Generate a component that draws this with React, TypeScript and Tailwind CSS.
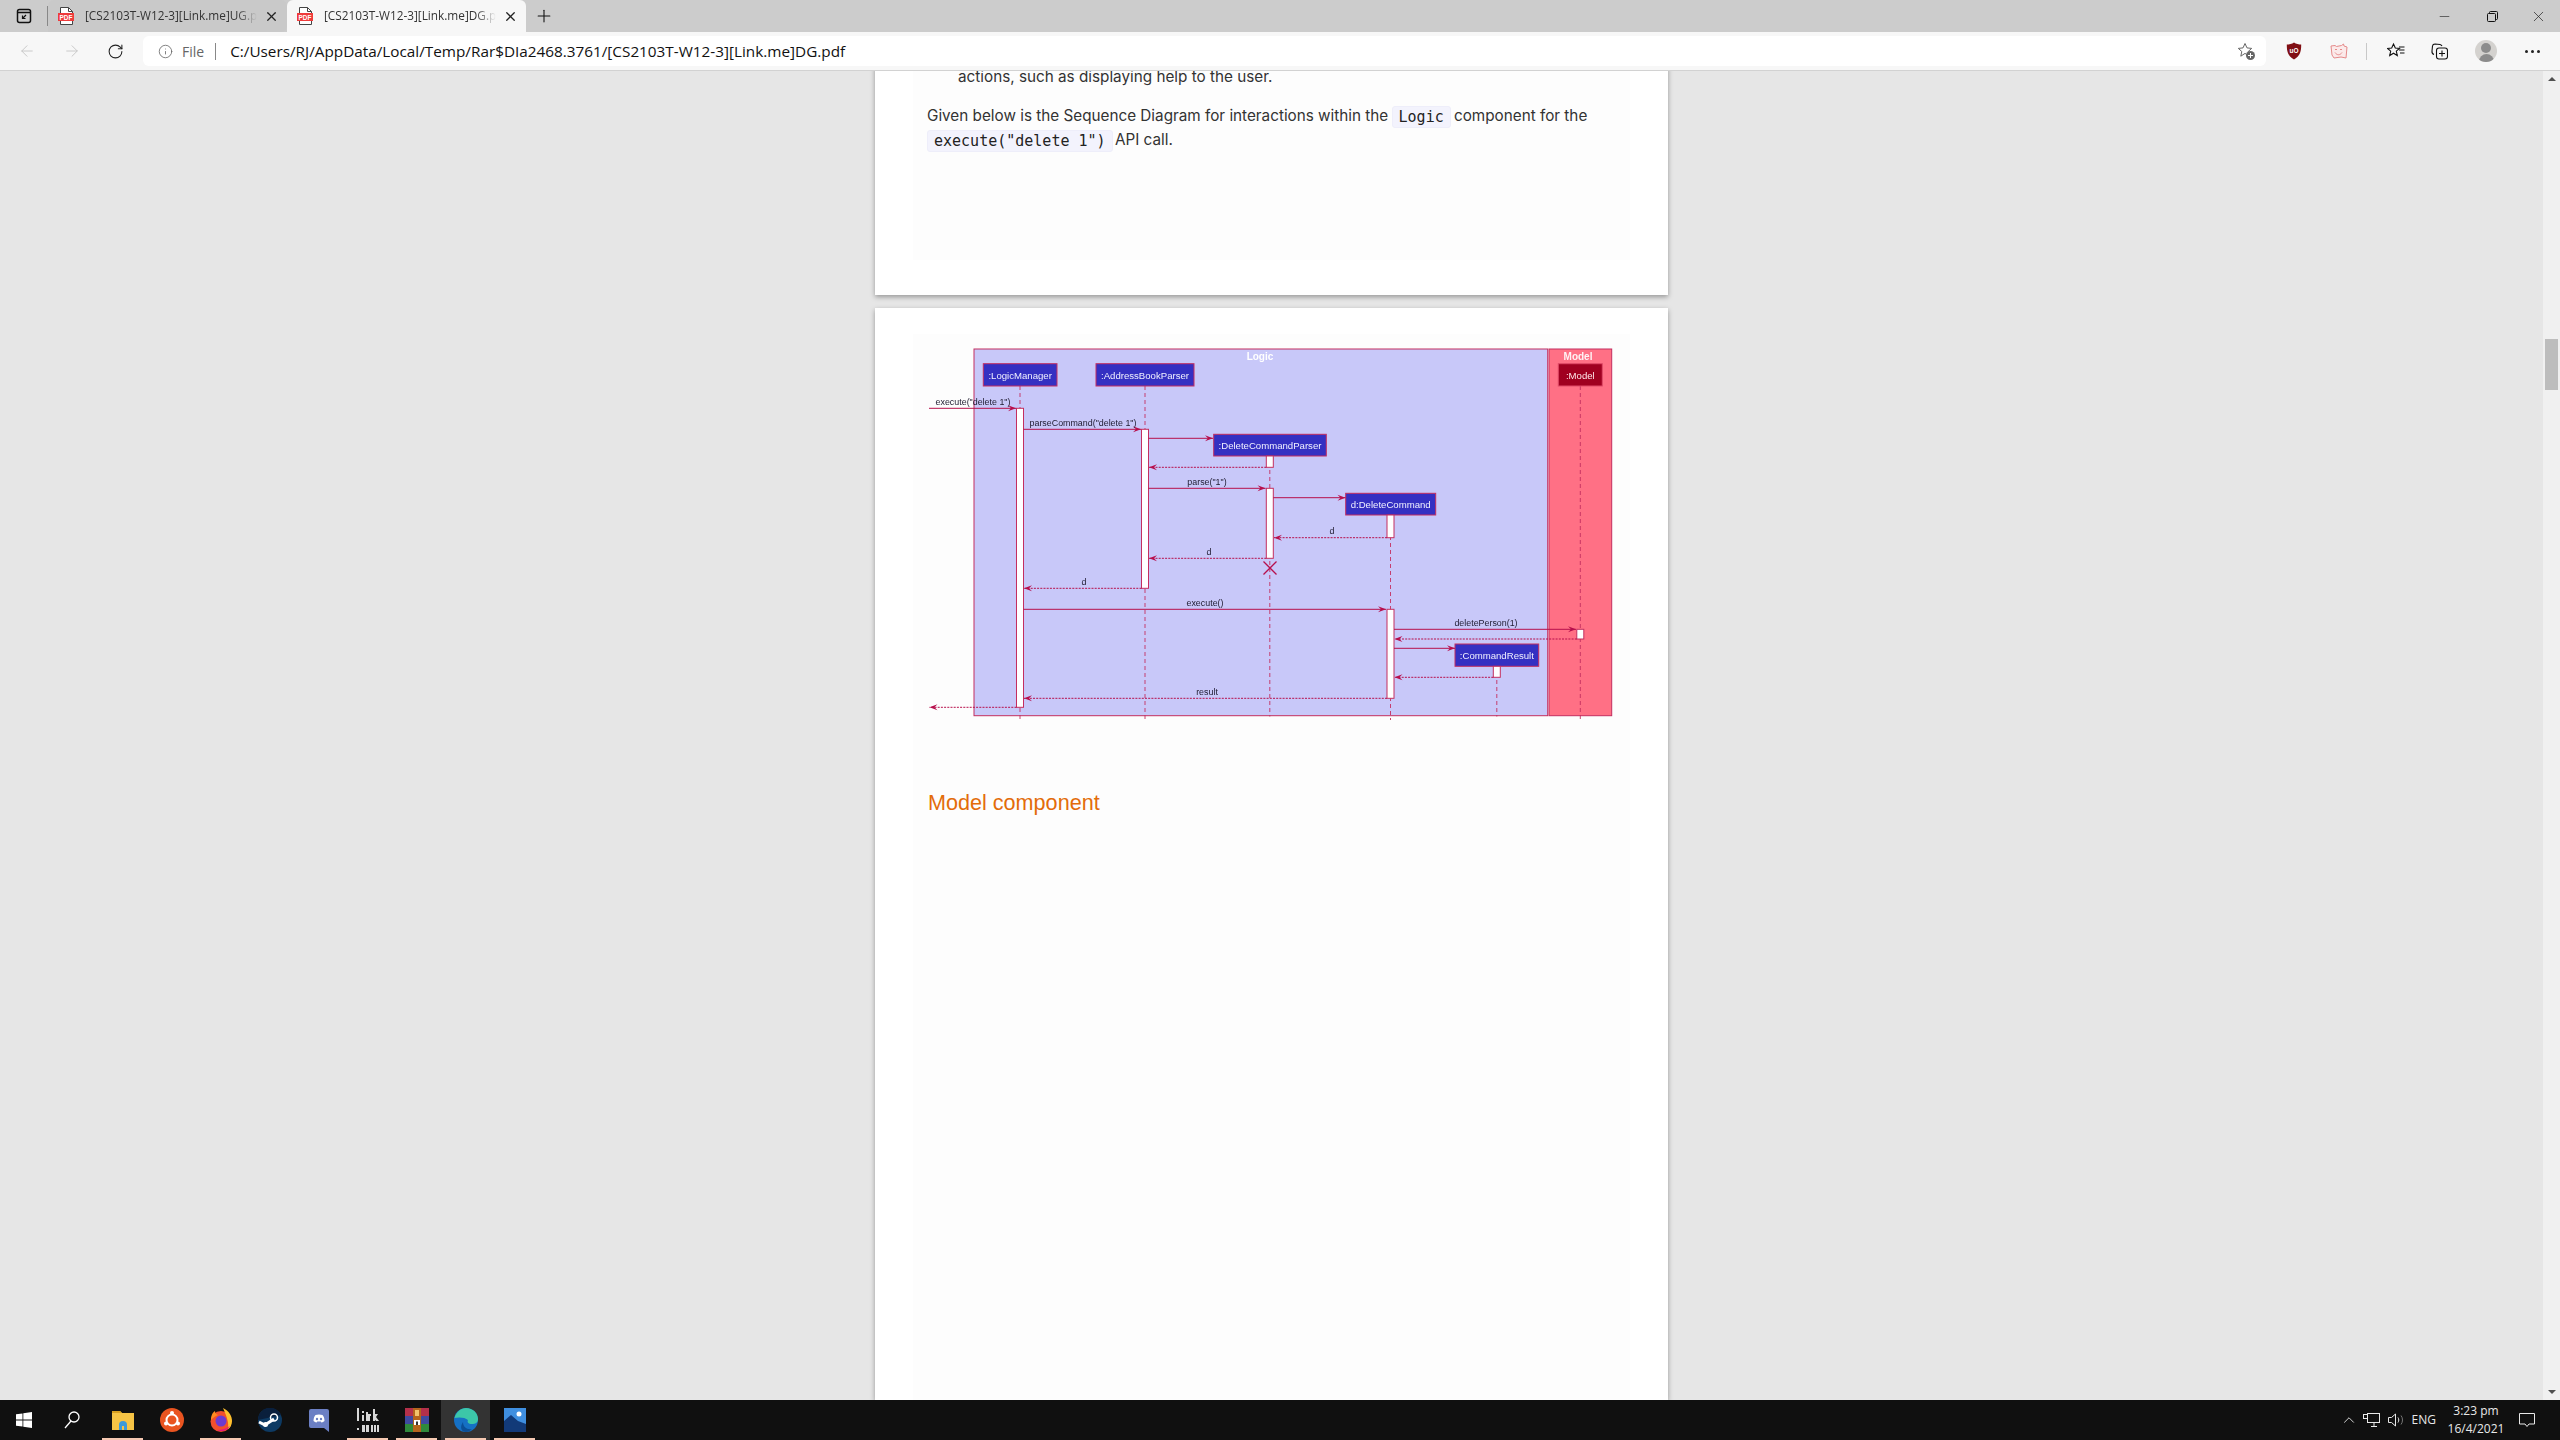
import { ArrowLeft, ArrowRight, RotateCw, Info, Plus, X, Minus, ChevronUp } from 'lucide-react'

const sans = 'font-["Open_Sans","Noto_Sans",sans-serif]'

function PdfIcon() {
  return (
    <svg width="16" height="18" viewBox="0 0 16 18" className="shrink-0">
      <path d="M2.5 .5h8l4 4v13h-12z" fill="#fff" stroke="#444" />
      <path d="M10.5 .5v4h4" fill="none" stroke="#444" />
      <rect x="0" y="6" width="16" height="8" fill="#ef3b3b" />
      <text x="8" y="12.6" textAnchor="middle" fontSize="6.4" fontWeight="700" fill="#fff" fontFamily="Liberation Sans">PDF</text>
    </svg>
  )
}

function Tab({ title, active }: { title: string; active?: boolean }) {
  return (
    <div className={`w-[239px] h-8 flex items-center pl-[10px] pr-[8px] rounded-t-md ${active ? 'bg-[#f7f7f7]' : 'bg-[#c9c9c9] rounded-br-md'}`}>
      <PdfIcon />
      <span className={`ml-[11px] w-[172px] overflow-hidden whitespace-nowrap text-[11.800px] text-[#333] [mask-image:linear-gradient(to_right,black_88%,transparent)] ${sans}`}>{title}</span>
      <X size={15} strokeWidth={2} className="ml-[7px] text-[#222] shrink-0" />
    </div>
  )
}

function TabStrip() {
  return (
    <div className="h-8 bg-[#cccccc] flex items-center">
      <div className="w-[47px] flex justify-center">
        <svg width="16" height="16" viewBox="0 0 16 16" fill="none" stroke="#111" strokeWidth="1.5">
          <rect x="1.5" y="1.5" width="13" height="13" rx="2" />
          <path d="M1.5 4.5h13" />
          <path d="M10 7l-3.5 3.5M6.5 7.5v3h3" strokeWidth="1.2" />
        </svg>
      </div>
      <div className="w-px h-5 bg-[#888]" />
      <Tab title="[CS2103T-W12-3][Link.me]UG.pdf" />
      <Tab title="[CS2103T-W12-3][Link.me]DG.pdf" active />
      <Plus size={20} strokeWidth={1.3} className="ml-[8px] text-[#111]" />
      <div className="ml-auto flex items-center text-[#222]">
        <Minus size={15} strokeWidth={1} className="mr-[35px]" />
        <svg width="11" height="11" viewBox="0 0 11 11" fill="none" stroke="#111" className="mr-[32px]">
          <rect x=".5" y="2.5" width="8" height="8" rx="1" />
          <path d="M2.5 2.5v-1a1 1 0 0 1 1-1h6a1 1 0 0 1 1 1v6a1 1 0 0 1-1 1h-1" />
        </svg>
        <X size={17} strokeWidth={1} className="mr-[13px]" />
      </div>
    </div>
  )
}

function Toolbar() {
  return (
    <div className="h-[39px] bg-[#f7f7f7] border-b border-[#d2d2d2] flex items-center">
      <ArrowLeft size={18} strokeWidth={1.2} className="ml-[18px] text-[#c4c4c4]" />
      <ArrowRight size={18} strokeWidth={1.2} className="ml-[27px] text-[#c4c4c4]" />
      <RotateCw size={17} strokeWidth={1.5} className="ml-[26px] text-[#222]" />
      <div className="ml-[19px] w-[2123px] h-[30px] bg-white rounded-md flex items-center">
        <Info size={15} strokeWidth={1.3} className="ml-[15px] text-[#666]" />
        <span className={`ml-[9px] text-[14px] text-[#666] ${sans}`}>File</span>
        <div className="ml-[11px] w-px h-[17px] bg-[#888]" />
        <span className={`ml-[14px] text-[15.300px] text-[#111] whitespace-nowrap ${sans}`}>C:/Users/RJ/AppData/Local/Temp/Rar$DIa2468.3761/[CS2103T-W12-3][Link.me]DG.pdf</span>
        <svg width="19" height="19" viewBox="0 0 19 19" className="ml-auto mr-[10px]">
          <path d="M8 1.5l2 4.4 4.7.5-3.5 3.1 1 4.7L8 11.4l-4.2 2.8 1-4.7L1.3 6.4l4.7-.5z" fill="none" stroke="#666" />
          <circle cx="13.5" cy="13.5" r="4.5" fill="#666" />
          <path d="M13.5 11v5M11 13.5h5" stroke="#fff" />
        </svg>
      </div>
      <svg width="16" height="18" viewBox="0 0 16 18" className="ml-[20px]">
        <path d="M8 .5c2 1.400 5 2 7.200 2 0 6-.7 11.500-7.200 15C1.500 14 .8 8.500.8 2.500 3 2.500 6 1.900 8 .5z" fill="#800f14" />
        <text x="8" y="10.500" textAnchor="middle" fontSize="6.500" fontWeight="700" fill="#fff" fontFamily="Liberation Sans">uO</text>
      </svg>
      <svg width="18" height="17" viewBox="0 0 18 17" fill="none" stroke="#e58a8a" className="ml-[28px]">
        <path d="M1 3l4-.5 1.500 1 5-1 2-1.500 .5 2 3 1-1 11-5-1-7 1-2-3z" fill="#fbeaea" />
        <path d="M5 6.500h2M10 6.500h2M5 9.500c2 3 5 3 7 0" />
      </svg>
      <div className="ml-[18px] w-px h-[17px] bg-[#c8c8c8]" />
      <svg width="18" height="18" viewBox="0 0 18 18" fill="none" stroke="#111" strokeWidth="1.1" className="ml-[20px]">
        <path d="M6.500 2l1.800 4 4.200.4-3.200 2.800 1 4.300-3.800-2.300-3.800 2.300 1-4.300L.5 6.400l4.200-.4z" />
        <path d="M12 8h5.500M13 11h4.500M12 5h5.500" />
      </svg>
      <svg width="17" height="17" viewBox="0 0 17 17" fill="none" stroke="#111" strokeWidth="1.1" className="ml-[26px]">
        <path d="M3 11.500C1.500 11 .8 9.500 1 8L1.500 3c.2-1.300 1.300-2 2.500-2l5 .5c1 .2 1.700.8 2 1.500" />
        <rect x="5.500" y="5" width="11" height="11" rx="2.500" />
        <path d="M11 7.500v6M8 10.500h6" />
      </svg>
      <div className="ml-[27px] w-[22px] h-[22px] rounded-full bg-[#d4d2cf] overflow-hidden flex flex-col items-center">
        <div className="mt-[3px] w-[10px] h-[10px] rounded-full bg-[#8c8c8c]" />
        <div className="mt-[1px] w-[15px] h-[8px] rounded-t-full bg-[#8c8c8c]" />
      </div>
      <div className="ml-[28px] flex gap-[3px]">
        <span className="w-[3px] h-[3px] rounded-full bg-[#222]" />
        <span className="w-[3px] h-[3px] rounded-full bg-[#222]" />
        <span className="w-[3px] h-[3px] rounded-full bg-[#222]" />
      </div>
    </div>
  )
}

function Code({ children, flush }: { children: string; flush?: boolean }) {
  return (
    <code className={`inline-block h-[22px] leading-[21px] px-[6px] rounded-[3px] bg-[#f3f3fd] border border-[#eeeefa] text-[15px] text-[#222] align-[-1px] font-["DejaVu_Sans_Mono",monospace] ${flush ? '-mr-[2px]' : '-mx-px'}`}>
      {children}
    </code>
  )
}

const line = '#c42f60'
const arrow = '#b70f4c'

type Msg = { y: number; x1: number; x2: number; dashed?: boolean; label?: string; lx?: number; ly?: number }

const messages: Msg[] = [
  { y: 68.3, x1: 9, x2: 96, label: 'execute("delete 1")', lx: 53, ly: 65 },
  { y: 89.3, x1: 103.5, x2: 221, label: 'parseCommand("delete 1")', lx: 163, ly: 86 },
  { y: 98.3, x1: 228.5, x2: 293 },
  { y: 127.3, x1: 346.3, x2: 229, dashed: true },
  { y: 148.3, x1: 228.5, x2: 345.5, label: 'parse("1")', lx: 287, ly: 145 },
  { y: 157.7, x1: 353.3, x2: 425.5 },
  { y: 197.7, x1: 467, x2: 354, dashed: true, label: 'd', lx: 412, ly: 194 },
  { y: 218.3, x1: 346.3, x2: 229, dashed: true, label: 'd', lx: 289, ly: 215 },
  { y: 248.3, x1: 221.5, x2: 104, dashed: true, label: 'd', lx: 164, ly: 245 },
  { y: 269.3, x1: 103.5, x2: 466, label: 'execute()', lx: 285, ly: 266 },
  { y: 289.3, x1: 474, x2: 656, label: 'deletePerson(1)', lx: 566, ly: 286 },
  { y: 299, x1: 656.8, x2: 474.5, dashed: true },
  { y: 308.3, x1: 474, x2: 535 },
  { y: 337.3, x1: 573.3, x2: 474.5, dashed: true },
  { y: 358.3, x1: 467, x2: 104, dashed: true, label: 'result', lx: 287, ly: 355 },
  { y: 367.3, x1: 96.5, x2: 9.5, dashed: true },
]

const actors = [
  { x: 63.3, y: 23.7, w: 73.7, h: 22.3, name: ':LogicManager' },
  { x: 176, y: 23.7, w: 98, h: 22.3, name: ':AddressBookParser' },
  { x: 293.7, y: 94.3, w: 112.6, h: 21.7, name: ':DeleteCommandParser' },
  { x: 425.7, y: 153.3, w: 90, h: 21.7, name: 'd:DeleteCommand' },
  { x: 535, y: 304, w: 83.7, h: 22.3, name: ':CommandResult' },
]

const lifelines = [
  { x: 100, y1: 46, y2: 380 },
  { x: 225, y1: 46, y2: 380 },
  { x: 349.8, y1: 116, y2: 376.5 },
  { x: 470.5, y1: 175, y2: 380 },
  { x: 576.8, y1: 326, y2: 376.5 },
  { x: 660.3, y1: 46, y2: 380 },
]

const activations = [
  { x: 96.5, y1: 68.3, y2: 367.3 },
  { x: 221.5, y1: 89.3, y2: 248.3 },
  { x: 346.3, y1: 116, y2: 127.3 },
  { x: 346.3, y1: 148.3, y2: 218.3 },
  { x: 467, y1: 175, y2: 197.7 },
  { x: 467, y1: 269.3, y2: 358.3 },
  { x: 573.3, y1: 326.3, y2: 337.3 },
  { x: 656.8, y1: 289.3, y2: 299 },
]

function SequenceDiagram() {
  return (
    <svg width="700" height="385" viewBox="0 0 700 385" className="block ml-[7px] blur-[0.35px]" fontFamily="Liberation Sans">
      <rect x="54" y="9" width="573.7" height="366.7" fill="#c8c8f9" stroke={line} strokeWidth="1" />
      <rect x="629" y="9" width="62.7" height="366.7" fill="#ff7085" stroke={line} strokeWidth="1" />
      <text x="340" y="19.5" textAnchor="middle" fontSize="10" fontWeight="700" fill="#ffffff">Logic</text>
      <text x="658" y="19.5" textAnchor="middle" fontSize="10" fontWeight="700" fill="#fff2f4">Model</text>

      {lifelines.map((l) => (
        <line key={l.x} x1={l.x} x2={l.x} y1={l.y1} y2={l.y2} stroke={line} strokeWidth="0.9" strokeDasharray="4 3" />
      ))}

      {actors.map((a) => (
        <g key={a.name}>
          <rect x={a.x} y={a.y} width={a.w} height={a.h} fill="#3430c2" stroke={line} strokeWidth="1" />
          <text x={a.x + a.w / 2} y={a.y + a.h / 2 + 3.7} textAnchor="middle" fontSize="9.6" fill="#f0f0ff">{a.name}</text>
        </g>
      ))}
      <rect x="638.3" y="23.7" width="44" height="22.3" fill="#a00020" stroke="#e04a68" strokeWidth="1" />
      <text x="660.3" y="38.5" textAnchor="middle" fontSize="9.6" fill="#ffe6ea">:Model</text>

      {activations.map((a) => (
        <rect key={`${a.x}-${a.y1}`} x={a.x} y={a.y1} width="7" height={a.y2 - a.y1} fill="#fff" stroke={line} strokeWidth="1" />
      ))}

      {messages.map((m) => {
        const dir = m.x2 > m.x1 ? -1 : 1
        return (
          <g key={m.y}>
            <line x1={m.x1} x2={m.x2} y1={m.y} y2={m.y} stroke={arrow} strokeWidth="1" strokeDasharray={m.dashed ? '2 1.2' : undefined} />
            <path d={`M${m.x2} ${m.y}l${dir * 8} -3l${dir * -3} 3l${dir * 3} 3z`} fill={arrow} />
            {m.label && (
              <text x={m.lx} y={m.ly} textAnchor="middle" fontSize="8.9" fill="#1f1b30">{m.label}</text>
            )}
          </g>
        )
      })}

      <path d="M343.5 221.5l13 13M356.5 221.5l-13 13" stroke={arrow} strokeWidth="1.3" />
    </svg>
  )
}

function Pages() {
  return (
    <div className="flex-1 flex flex-col items-center overflow-hidden">
      {/* page above the diagram, scrolled off at the top */}
      <div className="-mt-[6px] w-[793px] h-[230px] shrink-0 bg-white px-[38px] shadow-[0_2px_5px_rgba(0,0,0,0.35)]">
        <div className='h-[195px] bg-[#fdfdfd] pl-[14px] text-[15.280px] leading-[24px] text-[#333] font-["Inter",sans-serif]'>
          <p className="pl-[31px]">actions, such as displaying help to the user.</p>
          <p className="mt-[15px]">
            Given below is the Sequence Diagram for interactions within the <Code>Logic</Code> component for the
            <br />
            <Code flush>execute("delete 1")</Code> API call.
          </p>
        </div>
      </div>

      <div className="mt-[13px] w-[793px] flex-1 bg-white px-[38px] pt-[26px] shadow-[0_2px_5px_rgba(0,0,0,0.35)]">
        <div className="h-full bg-[#fdfdfd] pt-[6px]">
          <SequenceDiagram />
          <h2 className='mt-[63px] ml-[15px] text-[21.600px] leading-[30px] text-[#e36c0a] font-["Liberation_Sans",sans-serif]'>Model component</h2>
        </div>
      </div>
    </div>
  )
}

function Scrollbar() {
  return (
    <div className="w-[17px] bg-[#f0f0f0] flex flex-col items-center">
      <div className="mt-[6px] w-0 h-0 border-x-[4px] border-x-transparent border-b-[4px] border-b-[#505050]" />
      <div className="mt-[258px] w-[13px] h-[51px] bg-[#bdbdbd]" />
      <div className="mt-auto mb-[6px] w-0 h-0 border-x-[4px] border-x-transparent border-t-[4px] border-t-[#505050]" />
    </div>
  )
}

function TaskIcon({ children, running, active, width = 49 }: { children: React.ReactNode; running?: boolean; active?: boolean; width?: number }) {
  return (
    <div className={`relative h-10 flex items-center justify-center ${active ? 'bg-[#333333]' : ''}`} style={{ width }}>
      {children}
      {running && <span className="absolute left-[4px] right-[4px] bottom-0 h-[2px] bg-[#f6c9b2]" />}
    </div>
  )
}

function Taskbar() {
  return (
    <div className="h-10 bg-[#101010] flex items-center">
      <div className="w-[47px] flex justify-center">
        <svg width="16" height="16" viewBox="0 0 16 16" fill="#fff">
          <path d="M0 2.300l6.500-.9v6.200H0zM7.300 1.300L16 0v7.600H7.300zM0 8.400h6.500v6.200L0 13.700zM7.300 8.400H16V16l-8.700-1.200z" />
        </svg>
      </div>
      <div className="w-[50px] flex justify-center">
        <svg width="16" height="18" viewBox="0 0 16 18" fill="none" stroke="#fff" strokeWidth="1.300">
          <circle cx="10" cy="6" r="5" />
          <path d="M7 10L1 17" />
        </svg>
      </div>
      <div className="ml-[1px] flex">
        <TaskIcon running>
          <svg width="22" height="20" viewBox="0 0 22 20">
            <path d="M0 1h8l2 2h12v17H0z" fill="#f6c445" />
            <path d="M0 1h8l2 2H0z" fill="#d8a020" />
            <path d="M7 15a4 4 0 0 1 8 0v5H7z" fill="#3c9ad8" />
            <rect x="10" y="16" width="2" height="4" fill="#f6c445" />
          </svg>
        </TaskIcon>
        <TaskIcon>
          <svg width="24" height="24" viewBox="0 0 24 24">
            <circle cx="12" cy="12" r="12" fill="#e95420" />
            <circle cx="12" cy="12" r="5.500" fill="none" stroke="#fff" strokeWidth="2" />
            <circle cx="12" cy="5" r="2" fill="#fff" />
            <circle cx="6" cy="15.500" r="2" fill="#fff" />
            <circle cx="18" cy="15.500" r="2" fill="#fff" />
          </svg>
        </TaskIcon>
        <TaskIcon running>
          <svg width="24" height="24" viewBox="0 0 24 24">
            <circle cx="12" cy="13.500" r="10.500" fill="#f2502c" />
            <path d="M14 0c6 3 9 8 9 13 0 4-2 7-4 8 1-6-1-12-5-21z" fill="#ffc02e" />
            <path d="M2 12C2 7 4 4 6 3c0 2 1 3 3 4-3 1-5 3-7 5z" fill="#ff8a1f" />
            <circle cx="12" cy="13" r="5.500" fill="#6d3bd1" />
            <path d="M8 22c4 2 10 1 13-4-4 3-9 4-13 4z" fill="#e31587" />
          </svg>
        </TaskIcon>
        <TaskIcon>
          <svg width="24" height="24" viewBox="0 0 24 24">
            <circle cx="12" cy="12" r="12" fill="#0d3a63" />
            <path d="M0 12a12 12 0 0 1 23-5z" fill="#0a1f3c" />
            <path d="M1 14l6 3 9-6" fill="none" stroke="#fff" strokeWidth="3" />
            <circle cx="16" cy="9.500" r="3.500" fill="none" stroke="#fff" strokeWidth="1.500" />
            <circle cx="7.500" cy="16.500" r="2.500" fill="#fff" />
          </svg>
        </TaskIcon>
        <TaskIcon>
          <svg width="20" height="23" viewBox="0 0 20 23">
            <path d="M2 0h16a2 2 0 0 1 2 2v21l-5-4H2a2 2 0 0 1-2-2V2a2 2 0 0 1 2-2z" fill="#6b7fc4" />
            <path d="M4.500 12c0-3 1-5 2-6 2-.7 5-.7 7 0 1 1 2 3 2 6-1.500 1.500-3 1.500-3 1.500l-.7-1h-3.600l-.7 1s-1.500 0-3-1.500z" fill="#fff" />
            <circle cx="8" cy="10" r="1.200" fill="#6b7fc4" />
            <circle cx="12" cy="10" r="1.200" fill="#6b7fc4" />
          </svg>
        </TaskIcon>
        <TaskIcon running>
          <svg width="24" height="24" viewBox="0 0 24 24" fill="#d8d8d8">
            <path d="M1 0h2v13H1zM6 3h2v2H6zM6 7h2v6H6zM10 4h2v9h-2zM12 6h3v2h-1v5h-2zM17 1h2v12h-2zM19 6h3l-2 3 3 4h-3l-2-3z" />
            <path d="M1 20h2v2H1zM6 17h3v7H6zM10 17h3v7h-3zM15 17h2v7h-2zM18 17h2v7h-2zM21 17h2v7h-2z" />
          </svg>
        </TaskIcon>
        <TaskIcon running>
          <svg width="24" height="24" viewBox="0 0 24 24">
            <rect width="24" height="8" fill="#b4304a" />
            <rect y="8" width="24" height="8" fill="#3f4aa0" />
            <rect y="16" width="24" height="8" fill="#2f8a3c" />
            <rect x="8" y="0" width="8" height="24" fill="#b5651d" />
            <rect x="10" y="2" width="4" height="6" fill="#f2c46d" />
            <rect x="9" y="12" width="6" height="5" fill="#fff" />
            <rect x="11" y="13.500" width="2" height="3.500" fill="#333" />
          </svg>
        </TaskIcon>
        <TaskIcon running active>
          <svg width="24" height="24" viewBox="0 0 24 24">
            <circle cx="12" cy="12" r="12" fill="#1570c4" />
            <path d="M.5 10C2 4 7 0 12 0c7 0 12 5 12 11 0 4-3 5-6 5-4 0-5-2-4-4-3-3-10-3-13.500-2z" fill="#3cc6a8" />
            <path d="M9 14c0 5 4 8 9 7-2 2-4 3-6 3-4 0-7-4-3-10z" fill="#0b4f96" />
          </svg>
        </TaskIcon>
        <TaskIcon running>
          <svg width="22" height="24" viewBox="0 0 22 24">
            <rect width="22" height="24" fill="#3f8fe0" />
            <path d="M0 24V13l7-6 7 6 8 3v8z" fill="#123a78" />
            <circle cx="15" cy="6" r="2.500" fill="#fff" />
          </svg>
        </TaskIcon>
      </div>

      <div className="ml-auto flex items-center text-[#e8e8e8]">
        <ChevronUp size={18} strokeWidth={1.200} />
        <svg width="17" height="14" viewBox="0 0 17 14" fill="none" stroke="#e8e8e8" className="ml-[5px]">
          <rect x="4.500" y=".5" width="12" height="9" />
          <rect x=".5" y="1.500" width="4" height="4" fill="#101010" />
          <path d="M8 13.500h6M11 10v3.500" />
        </svg>
        <svg width="17" height="14" viewBox="0 0 17 14" fill="none" stroke="#e8e8e8" className="ml-[8px]">
          <path d="M.5 4.500h3l4-3.500v12l-4-3.500h-3z" />
          <path d="M10 4.500c1 1.500 1 3.500 0 5" />
          <path d="M13 2.500c2 2.500 2 6.500 0 9" stroke="#777" />
        </svg>
        <span className={`ml-[7px] text-[12px] ${sans}`}>ENG</span>
        <div className={`ml-[10px] w-[60px] text-center text-[12px] leading-[18px] ${sans}`}>
          <div>3:23 pm</div>
          <div>16/4/2021</div>
        </div>
        <svg width="16" height="16" viewBox="0 0 16 16" fill="none" stroke="#e8e8e8" className="ml-[13px] mr-[25px]">
          <path d="M.5 1.500h15v10.500h-5.500l-2 2.500-2-2.500H.5z" />
        </svg>
      </div>
    </div>
  )
}

export default function App() {
  return (
    <div className="w-[2560px] h-screen flex flex-col overflow-hidden bg-[#e6e6e6]">
      <TabStrip />
      <Toolbar />
      <div className="flex-1 flex min-h-0 overflow-hidden">
        <Pages />
        <Scrollbar />
      </div>
      <Taskbar />
    </div>
  )
}
